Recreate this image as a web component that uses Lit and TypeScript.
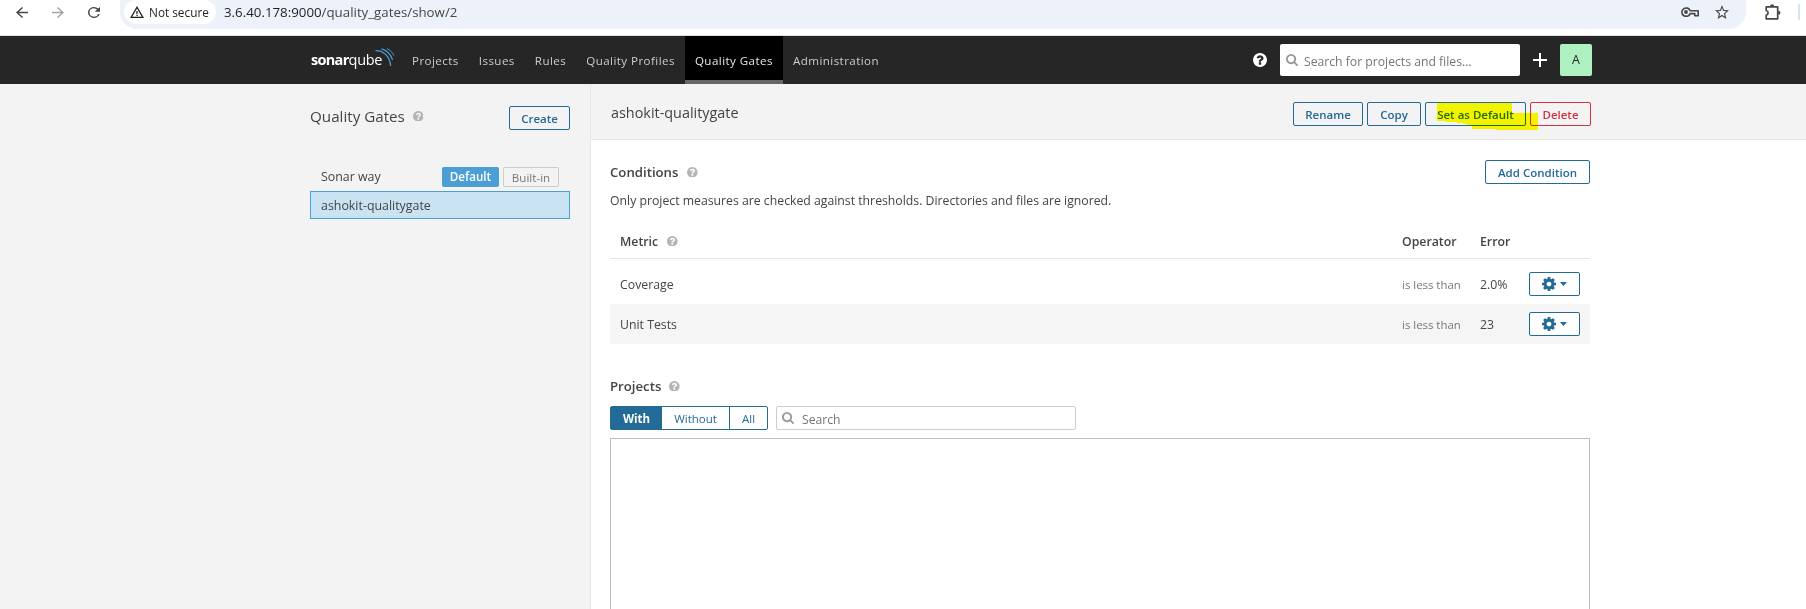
import { LitElement, html, css, svg } from "lit";
import { customElement, property } from "lit/decorators.js";
import { classMap } from "lit/directives/class-map.js";

const HELP =
  "M896 1248v-192q0-14-9-23t-23-9h-192q-14 0-23 9t-9 23v192q0 14 9 23t23 9h192q14 0 23-9t9-23zm256-672q0-88-55.5-163t-138.5-116-170-41q-243 0-371 213-15 24 8 42l132 100q7 6 19 6 16 0 25-12 53-68 86-92 34-24 86-24 48 0 85.5 26t37.5 59q0 38-20 61t-68 45q-63 28-115.5 86.5t-52.5 125.5v36q0 14 9 23t23 9h192q14 0 23-9t9-23q0-19 21.5-49.5t54.5-49.5q32-18 49-28.5t46-35 44.5-48 28-60.5 12.5-81zm384 192q0 209-103 385.5t-279.5 279.5-385.5 103-385.5-103-279.5-279.5-103-385.5 103-385.5 279.5-279.5 385.5-103 385.5 103 279.5 279.5 103 385.5z";
const GEAR =
  "M1024 768q0-106-75-181t-181-75-181 75-75 181 75 181 181 75 181-75 75-181zm512-109v222q0 12-8 23t-20 13l-185 28q-19 54-39 91 35 50 107 138 10 12 10 25t-9 23q-27 37-99 108t-94 71q-12 0-26-9l-138-108q-44 23-91 38-16 136-29 186-7 28-36 28h-222q-14 0-24.5-8.5t-11.5-21.5l-28-184q-49-16-90-37l-141 107q-10 9-25 9-14 0-25-11-126-114-165-168-7-10-7-23 0-12 8-23 15-21 51-66.5t54-70.5q-27-50-41-99l-183-27q-13-2-21-12.5t-8-23.5v-222q0-12 8-23t19-13l186-28q14-46 39-92-40-57-107-138-10-12-10-24 0-10 9-23 26-36 98.5-107.5t94.5-71.5q13 0 26 10l138 107q44-23 91-38 16-136 29-186 7-28 36-28h222q14 0 24.5 8.5t11.5 21.5l28 184q49 16 90 37l142-107q9-9 24-9 13 0 25 10 129 119 165 170 7 8 7 22 0 12-8 23-15 21-51 66.5t-54 70.5q26 50 41 98l183 28q13 2 21 12.5t8 23.5z";
const SEARCH =
  "M1152 704q0-185-131.5-316.5t-316.5-131.5-316.5 131.5-131.5 316.5 131.5 316.5 316.5 131.5 316.5-131.5 131.5-316.5zm512 832q0 52-38 90t-90 38q-54 0-90-38l-343-342q-179 124-399 124-143 0-273.5-55.5t-225-150-150-225-55.5-273.5 55.5-273.5 150-225 225-150 273.5-55.5 273.5 55.5 225 150 150 225 55.5 273.5q0 220-124 399l343 343q37 37 37 90z";

const ICONS: Record<string, { box: string; body: unknown }> = {
  help: { box: "0 0 1536 1536", body: svg`<path d=${HELP} />` },
  gear: { box: "0 0 1536 1536", body: svg`<path d=${GEAR} />` },
  search: { box: "0 0 1664 1664", body: svg`<path d=${SEARCH} />` },
  caret: { box: "0 0 7 4", body: svg`<path d="M0 0h7L3.5 4z" />` },
  plus: { box: "0 0 14 14", body: svg`<path d="M6 0h2v6h6v2H8v6H6V8H0V6h6z" />` },
  back: {
    box: "4 4 16 16",
    body: svg`<path d="M20 11H7.83l5.59-5.59L12 4l-8 8 8 8 1.41-1.41L7.83 13H20v-2z" />`,
  },
  forward: {
    box: "4 4 16 16",
    body: svg`<path d="M12 4l-1.41 1.41L16.17 11H4v2h12.17l-5.58 5.59L12 20l8-8z" />`,
  },
  reload: {
    box: "4 4 16 16",
    body: svg`<path d="M17.65 6.35A7.95 7.95 0 0 0 12 4a8 8 0 1 0 7.73 10h-2.08A6 6 0 1 1 12 6c1.66 0 3.14.69 4.22 1.78L13 11h7V4z" />`,
  },
  warning: {
    box: "1 2 22 19",
    body: svg`<path d="M12 5.99 19.53 19H4.47L12 5.99M12 2 1 21h22L12 2zm1 14h-2v2h2v-2zm0-6h-2v4.5h2V10z" />`,
  },
  key: {
    box: "0 0 18 10",
    body: svg`<path d="M9.2 3.7H17.2V8.7H13.8V6.6H9.2A4.3 4.2 0 1 1 9.2 3.7z" fill="none" stroke="currentColor" stroke-width="1.6" stroke-linejoin="round" /><circle cx="5" cy="5" r="1.9" />`,
  },
  star: {
    box: "2 2 20 19",
    body: svg`<path d="m22 9.24-7.19-.62L12 2 9.19 8.63 2 9.24l5.46 4.73L5.82 21 12 17.27 18.18 21l-1.63-7.03L22 9.24zM12 15.4l-3.76 2.27 1-4.28-3.32-2.88 4.38-.38L12 6.1l1.71 4.04 4.38.38-3.32 2.88 1 4.28L12 15.4z" />`,
  },
  puzzle: {
    box: "0 0 16 16",
    body: svg`<path d="M1.2 2.9H12.7V14.8H1.2V11.2A2.4 2.4 0 0 0 1.2 6.5z" fill="none" stroke="currentColor" stroke-width="1.7" stroke-linejoin="round" /><path d="M5 2.5a2.1 2.3 0 0 1 4.2 0zM13.3 6.7a2.2 2.1 0 0 1 0 4.2z" />`,
  },
  waves: {
    box: "0 0 20 19",
    body: svg`<g fill="none" stroke="#4b9fd5"><path d="M.5 2.6C8.5 2.3 15 8.6 15.6 18" stroke-width="1.3" /><path d="M6.4.9C11.6 2.3 15.9 6.6 17.6 12" stroke-width="1.1" /><path d="M12 .6C15 2 17.5 4.5 19 7.6" /></g>`,
  },
};

@customElement("sq-icon")
export class SqIcon extends LitElement {
  @property() name = "help";

  static styles = css`
    :host {
      display: block;
      flex: none;
    }
    svg {
      display: block;
      width: 100%;
      height: 100%;
      fill: currentColor;
    }
  `;

  render() {
    const icon = ICONS[this.name];
    return html`<svg viewBox=${icon.box} preserveAspectRatio="none">${icon.body}</svg>`;
  }
}

@customElement("browser-bar")
export class BrowserBar extends LitElement {
  static styles = css`
    :host {
      display: flex;
      height: 35px;
      background: #fff;
      border-bottom: 1px solid #dde1de;
      color: #474747;
      font-family: "Open Sans", sans-serif;
    }
    .nav {
      display: flex;
      gap: 24px;
      width: 104px;
      height: 24px;
      padding-left: 16px;
      align-items: center;
    }
    .arrow {
      width: 12px;
      height: 11px;
    }
    .dim {
      color: #a3a3a3;
    }
    .omnibox {
      display: flex;
      flex: 1;
      height: 29px;
      box-sizing: border-box;
      padding: 0 17px 5px 4px;
      border-radius: 0 0 17px 17px;
      background: #ecf1fa;
      align-items: center;
    }
    .secure {
      display: flex;
      gap: 5px;
      box-sizing: border-box;
      width: 92px;
      height: 24px;
      padding: 0 0 1px 6px;
      align-items: center;
      border-radius: 12px;
      background: #fff;
      color: #1f1f1f;
      font-size: 11.8px;
      font-weight: 500;
      white-space: nowrap;
    }
    .warning {
      width: 14px;
      height: 12px;
    }
    .url {
      flex: 1;
      padding: 0 0 1px 8px;
      font-size: 13.3px;
    }
    .host {
      color: #1f1f1f;
    }
    .key {
      width: 18px;
      height: 10px;
      margin-right: 16px;
    }
    .star {
      width: 14px;
      height: 14px;
    }
    .tail {
      display: flex;
      width: 60px;
      height: 23px;
      box-sizing: border-box;
      padding: 0 6px 0 19px;
      align-items: center;
      justify-content: space-between;
    }
    .puzzle {
      width: 16px;
      height: 16px;
    }
    .divider {
      width: 2px;
      height: 16px;
      margin-top: 1px;
      background: #d3e3fd;
    }
  `;

  render() {
    return html`
      <div class="nav">
        <sq-icon class="arrow" name="back"></sq-icon>
        <sq-icon class="arrow dim" name="forward"></sq-icon>
        <sq-icon class="arrow" name="reload"></sq-icon>
      </div>
      <div class="omnibox">
        <div class="secure"><sq-icon class="warning" name="warning"></sq-icon>Not secure</div>
        <div class="url"><span class="host">3.6.40.178:9000</span>/quality_gates/show/2</div>
        <sq-icon class="key" name="key"></sq-icon>
        <sq-icon class="star" name="star"></sq-icon>
      </div>
      <div class="tail">
        <sq-icon class="puzzle" name="puzzle"></sq-icon>
        <div class="divider"></div>
      </div>
    `;
  }
}

const TABS = ["Projects", "Issues", "Rules", "Quality Profiles", "Quality Gates", "Administration"];

@customElement("global-nav")
export class GlobalNav extends LitElement {
  static styles = css`
    :host {
      display: flex;
      box-sizing: border-box;
      height: 48px;
      padding: 0 214px 0 311px;
      background: #262626;
      color: #ccc;
      font-family: "Open Sans", sans-serif;
      align-items: center;
    }
    .logo {
      display: flex;
      width: 91px;
      color: #fff;
      font-size: 14.5px;
      line-height: 48px;
      letter-spacing: -0.3px;
    }
    .strong {
      font-weight: 700;
      letter-spacing: -0.7px;
    }
    .waves {
      width: 20px;
      height: 19px;
      margin: 12px 0 0 -7px;
    }
    .tabs {
      display: flex;
      flex: 1;
      height: 48px;
    }
    .tab {
      padding: 1px 10px 0;
      font-size: 11.6px;
      letter-spacing: 0.43px;
      line-height: 47px;
      white-space: nowrap;
    }
    .active {
      height: 43px;
      border-bottom: 4px solid #666;
      background: #000;
      color: #e6e6e6;
    }
    .help {
      width: 14px;
      height: 14px;
      margin-right: 13px;
      color: #fff;
    }
    .search {
      display: flex;
      box-sizing: border-box;
      width: 240px;
      height: 32px;
      padding-left: 6px;
      align-items: center;
      border-radius: 2px;
      background: #fff;
      color: #757575;
      font-size: 12.2px;
    }
    .search sq-icon {
      width: 12px;
      height: 12px;
      margin-right: 6px;
      color: #999;
    }
    .search span {
      padding-top: 2px;
    }
    .plus {
      width: 14px;
      height: 14px;
      margin: 0 13px;
      color: #fff;
    }
    .avatar {
      width: 32px;
      border-radius: 2px;
      background: #aef0bf;
      color: #262626;
      font-size: 12.5px;
      line-height: 32px;
      text-align: center;
    }
  `;

  render() {
    return html`
      <div class="logo">
        <span class="strong">sonar</span><span>qube</span>
        <sq-icon class="waves" name="waves"></sq-icon>
      </div>
      <div class="tabs">
        ${TABS.map(
          (t) => html`<div class=${classMap({ tab: true, active: t === "Quality Gates" })}>${t}</div>`
        )}
      </div>
      <sq-icon class="help" name="help"></sq-icon>
      <div class="search">
        <sq-icon name="search"></sq-icon><span>Search for projects and files...</span>
      </div>
      <sq-icon class="plus" name="plus"></sq-icon>
      <div class="avatar">A</div>
    `;
  }
}

const shared = css`
  .btn {
    box-sizing: border-box;
    height: 24px;
    border: 1px solid #236a97;
    border-radius: 2px;
    color: #236a97;
    font-size: 11.5px;
    font-weight: 600;
    line-height: 23px;
    text-align: center;
    white-space: nowrap;
  }
  .hint {
    width: 10.6px;
    height: 10.6px;
    color: #b4b4b4;
  }
`;

@customElement("gate-list")
export class GateList extends LitElement {
  static styles = [
    shared,
    css`
      :host {
        box-sizing: border-box;
        padding: 22px 20px 0 310px;
        border-right: 1px solid #e6e6e6;
        background: #f3f3f3;
      }
      .head {
        display: flex;
        height: 24px;
        margin-bottom: 34px;
      }
      .title {
        flex: 1;
        display: flex;
        gap: 8px;
        height: 20px;
        align-items: center;
        font-size: 15.2px;
      }
      .btn {
        width: 61px;
      }
      .gate {
        display: flex;
        box-sizing: border-box;
        height: 28px;
        margin-bottom: -1px;
        padding: 0 10px 3px;
        border: 1px solid transparent;
        align-items: center;
        font-size: 12.4px;
      }
      .name {
        flex: 1;
      }
      .sel {
        padding: 1px 10px 0;
        border-color: #4b9fd5;
        background: #cae3f2;
      }
      .badge {
        box-sizing: border-box;
        height: 20px;
        border-radius: 2px;
        font-size: 11.6px;
        text-align: center;
      }
      .default {
        width: 57px;
        margin-right: 4px;
        background: #4b9fd5;
        color: #fff;
        font-weight: 600;
        line-height: 19px;
      }
      .builtin {
        width: 56px;
        border: 1px solid #cdcdcd;
        color: #777;
        line-height: 19px;
      }
    `,
  ];

  render() {
    return html`
      <div class="head">
        <div class="title">Quality Gates<sq-icon class="hint" name="help"></sq-icon></div>
        <div class="btn">Create</div>
      </div>
      <div class="gate">
        <span class="name">Sonar way</span>
        <span class="badge default">Default</span><span class="badge builtin">Built-in</span>
      </div>
      <div class="gate sel"><span class="name">ashokit-qualitygate</span></div>
    `;
  }
}

const CONDITIONS = [
  { metric: "Coverage", op: "is less than", error: "2.0%" },
  { metric: "Unit Tests", op: "is less than", error: "23" },
];

@customElement("gate-details")
export class GateDetails extends LitElement {
  static styles = [
    shared,
    css`
      :host {
        display: flex;
        flex-direction: column;
        min-width: 0;
        background: #fff;
      }
      .header {
        display: flex;
        box-sizing: border-box;
        height: 56px;
        padding: 18px 215px 0 20px;
        border-bottom: 1px solid #e6e6e6;
        background: #f3f3f3;
      }
      .name {
        flex: 1;
        font-size: 14.4px;
        line-height: 22px;
      }
      .actions {
        display: flex;
        gap: 4px;
        position: relative;
      }
      .rename {
        width: 70px;
      }
      .copy {
        width: 54px;
      }
      .setdefault {
        width: 101px;
      }
      .delete {
        width: 61px;
        border-color: #d4333f;
        color: #d4333f;
      }
      .marker {
        position: absolute;
        left: 144px;
        top: 1px;
        width: 101px;
        height: 27px;
        fill: #ff0;
        mix-blend-mode: multiply;
      }
      .content {
        display: flex;
        flex: 1;
        flex-direction: column;
        padding: 20px 216px 0 19px;
      }
      .row {
        display: flex;
        height: 24px;
        justify-content: space-between;
        align-items: center;
      }
      .section {
        display: flex;
        gap: 9px;
        align-items: center;
        font-size: 13.2px;
        font-weight: 600;
        line-height: 24px;
      }
      .add {
        width: 105px;
      }
      .note {
        margin-top: 7px;
        font-size: 12.25px;
        line-height: 19px;
      }
      .table {
        margin-top: 14px;
        font-size: 12.3px;
      }
      .line {
        display: grid;
        grid-template-columns: 1fr 78px 49px 51px;
        box-sizing: border-box;
        height: 40px;
        padding: 0 10px;
        align-items: center;
      }
      .thead {
        height: 35px;
        margin-bottom: 5px;
        border-bottom: 1px solid #e6e6e6;
        font-weight: 600;
      }
      .metric {
        display: flex;
        gap: 9px;
        align-items: center;
      }
      .alt {
        background: #f5f5f5;
      }
      .op {
        color: #777;
        font-size: 11.4px;
      }
      .gear {
        display: flex;
        gap: 4px;
        align-items: center;
        justify-content: center;
        background: #fff;
      }
      .cog {
        width: 14px;
        height: 14px;
      }
      .caret {
        width: 7px;
        height: 4px;
      }
      .projects {
        gap: 8px;
        margin-top: 30px;
      }
      .filters {
        display: flex;
        gap: 8px;
        margin-top: 8px;
      }
      .toggle {
        display: flex;
        box-sizing: border-box;
        width: 158px;
        height: 24px;
        border: 1px solid #236a97;
        border-radius: 2px;
        color: #236a97;
        font-size: 11.5px;
        line-height: 23px;
        text-align: center;
      }
      .with {
        width: 51px;
        background: #236a97;
        color: #fff;
        font-weight: 700;
      }
      .without {
        width: 67px;
        border-right: 1px solid #236a97;
      }
      .all {
        flex: 1;
      }
      .search {
        display: flex;
        box-sizing: border-box;
        width: 300px;
        height: 24px;
        padding-left: 5px;
        border: 1px solid #cdcdcd;
        border-radius: 2px;
        align-items: center;
        color: #757575;
        font-size: 12.2px;
      }
      .search sq-icon {
        width: 12px;
        height: 12px;
        margin-right: 8px;
        color: #999;
      }
      .search span {
        padding-top: 2px;
      }
      .list {
        flex: 1;
        margin-top: 8px;
        border: 1px solid #bfbfbf;
        border-bottom: 0;
      }
    `,
  ];

  render() {
    return html`
      <div class="header">
        <div class="name">ashokit-qualitygate</div>
        <div class="actions">
          <div class="btn rename">Rename</div>
          <div class="btn copy">Copy</div>
          <div class="btn setdefault">Set as Default</div>
          <div class="btn delete">Delete</div>
          <svg class="marker" viewBox="0 0 101 27">
            <path d="M0 0H75V10H101V27H59V26H35V22H30V21H26V20H20V19H9V18H0z" />
          </svg>
        </div>
      </div>
      <div class="content">
        <div class="row">
          <div class="section">Conditions<sq-icon class="hint" name="help"></sq-icon></div>
          <div class="btn add">Add Condition</div>
        </div>
        <div class="note">
          Only project measures are checked against thresholds. Directories and files are ignored.
        </div>
        <div class="table">
          <div class="line thead">
            <div class="metric">Metric<sq-icon class="hint" name="help"></sq-icon></div>
            <div>Operator</div>
            <div>Error</div>
          </div>
          ${CONDITIONS.map(
            (c, i) => html`<div class=${classMap({ line: true, alt: i % 2 === 1 })}>
              <div>${c.metric}</div>
              <div class="op">${c.op}</div>
              <div>${c.error}</div>
              <div class="btn gear">
                <sq-icon class="cog" name="gear"></sq-icon><sq-icon class="caret" name="caret"></sq-icon>
              </div>
            </div>`
          )}
        </div>
        <div class="section projects">Projects<sq-icon class="hint" name="help"></sq-icon></div>
        <div class="filters">
          <div class="toggle">
            <div class="with">With</div>
            <div class="without">Without</div>
            <div class="all">All</div>
          </div>
          <div class="search"><sq-icon name="search"></sq-icon><span>Search</span></div>
        </div>
        <div class="list"></div>
      </div>
    `;
  }
}

@customElement("app-root")
export class AppRoot extends LitElement {
  static styles = css`
    :host {
      display: flex;
      flex-direction: column;
      height: 609px;
      overflow: hidden;
      color: #444;
      font-family: "Open Sans", sans-serif;
    }
    .page {
      display: grid;
      grid-template-columns: 591px 1fr;
      flex: 1;
    }
  `;

  render() {
    return html`
      <browser-bar></browser-bar>
      <global-nav></global-nav>
      <div class="page">
        <gate-list></gate-list>
        <gate-details></gate-details>
      </div>
    `;
  }
}
